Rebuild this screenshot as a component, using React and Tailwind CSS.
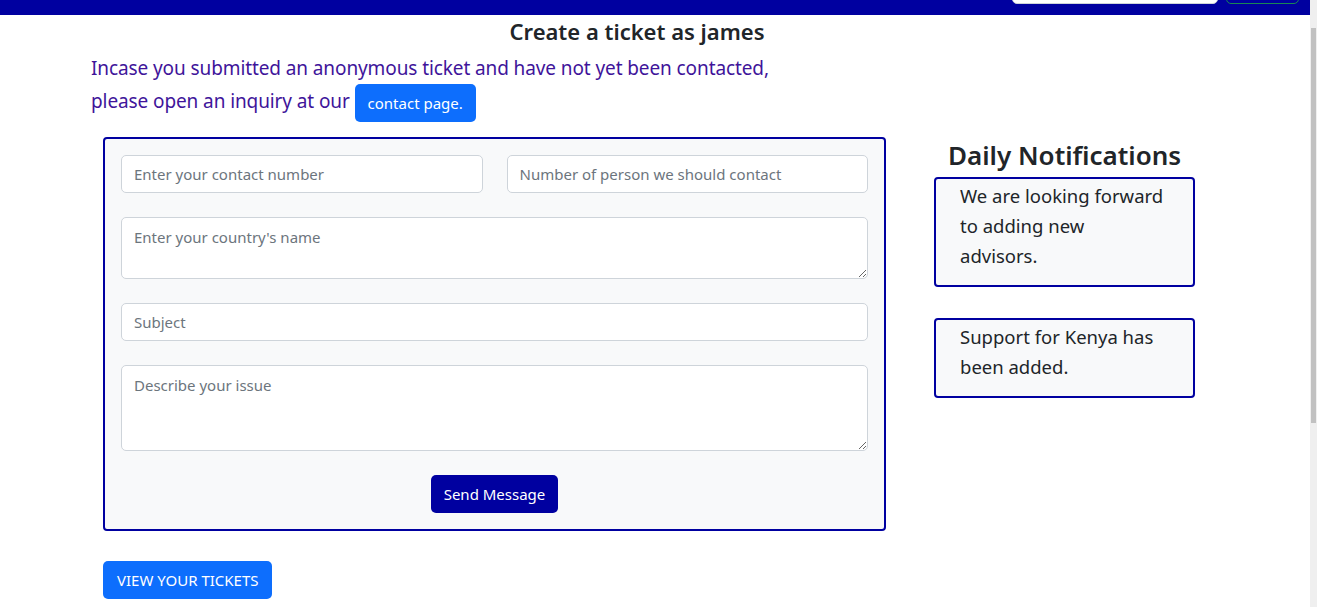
import React from 'react';

const font = { fontFamily: '"Noto Sans", "Open Sans", sans-serif' };

const inputCls =
  'w-full h-[38px] px-3 bg-white border border-[#ced4da] rounded-[5px] text-[15px] text-[#212529] placeholder:text-[#6c757d] outline-none';

const Notification = ({ lines }) => (
  <div className="w-[261px] border-2 border-[#0000a0] rounded-[4px] bg-[#f8f9fa] pl-[24px] pr-4 pt-[2px] pb-[14px] text-[18.5px] leading-[30px] text-[#212529]">
    {lines.map((l) => (
      <div key={l} className="whitespace-nowrap">
        {l}
      </div>
    ))}
  </div>
);

const App = () => {
  return (
    <div className="flex bg-white" style={font}>
      <div className="flex-1 min-w-0">
        {/* Navbar, scrolled mostly off screen */}
        <nav className="h-[15px] bg-[#0000a0] overflow-hidden flex justify-end items-end pr-[11px]">
          <div className="flex items-end gap-[8px] mb-[11px]">
            <div className="w-[206px] h-[30px] bg-white border border-[#ced4da] rounded-[5px]"></div>
            <div className="w-[73px] h-[30px] border border-[#198754] rounded-[5px]"></div>
          </div>
        </nav>

        <h2 className="text-center text-[22px] font-semibold text-[#212529] leading-[32px] pr-[36px]">
          Create a ticket as james
        </h2>

        <p className="pl-[91px] mt-[6px] text-[19px] tracking-[-0.1px] leading-[31px] text-[#40149a]">
          Incase you submitted an anonymous ticket and have not yet been contacted,
          <br />
          please open an inquiry at our{' '}
          <a
            href="#"
            className="inline-flex items-center h-[38px] px-[13px] bg-[#0d6efd] text-white text-[15px] tracking-normal rounded-[5px] align-middle"
          >
            contact page.
          </a>
        </p>

        <div className="flex mt-[15px] pl-[103px]">
          {/* Ticket form */}
          <div className="w-[783px] border-2 border-[#0000a0] rounded-[4px] bg-[#f8f9fa] px-[16px] pt-[16px] pb-[16px]">
            <div className="grid grid-cols-2 gap-x-[24px]">
              <input className={inputCls} placeholder="Enter your contact number" />
              <input className={inputCls} placeholder="Number of person we should contact" />
            </div>
            <textarea
              className="mt-[24px] w-full h-[62px] px-3 py-[8px] bg-white border border-[#ced4da] rounded-[5px] text-[15px] placeholder:text-[#6c757d] outline-none block"
              placeholder="Enter your country's name"
            ></textarea>
            <input className={`${inputCls} mt-[24px] block`} placeholder="Subject" />
            <textarea
              className="mt-[24px] w-full h-[86px] px-3 py-[8px] bg-white border border-[#ced4da] rounded-[5px] text-[15px] placeholder:text-[#6c757d] outline-none block"
              placeholder="Describe your issue"
            ></textarea>
            <div className="flex justify-center mt-[24px]">
              <button className="h-[38px] px-[13px] bg-[#0000a0] text-white text-[15px] rounded-[5px]">
                Send Message
              </button>
            </div>
          </div>

          {/* Daily notifications */}
          <div className="ml-[48px] flex flex-col">
            <h3 className="text-[26px] font-semibold text-[#212529] leading-[36px] pl-[14px] mb-[4px]">
              Daily Notifications
            </h3>
            <Notification lines={['We are looking forward', 'to adding new', 'advisors.']} />
            <div className="h-[31px]"></div>
            <Notification lines={['Support for Kenya has', 'been added.']} />
          </div>
        </div>

        <div className="pl-[103px] mt-[30px] pb-[8px]">
          <button className="h-[38px] px-[14px] bg-[#0d6efd] text-white text-[15px] rounded-[5px]">
            VIEW YOUR TICKETS
          </button>
        </div>
      </div>

      {/* Scrollbar */}
      <div className="w-[7px] bg-[#efefef] flex justify-center">
        <div className="w-[5px] h-[395px] mt-[28px] bg-[#c1c1c1]"></div>
      </div>
    </div>
  );
};

export default App;
